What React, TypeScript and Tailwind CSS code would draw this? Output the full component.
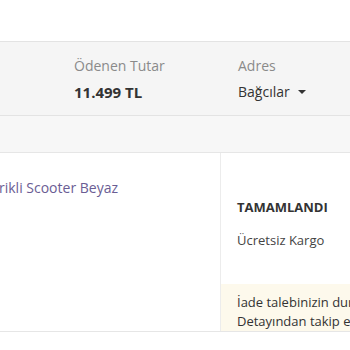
export default function App() {
  return (
    <div className="w-[350px] h-[350px] overflow-hidden bg-white" style={{ fontFamily: '"Open Sans", sans-serif' }}>
      <div className="h-[41px] bg-white" />
      <div className="border-t border-[#e3e3e3] bg-[#f5f5f5] h-[74px] flex pl-[74px] pt-[14px]">
        <div className="w-[164px] shrink-0">
          <div className="text-[14px] leading-[20px] text-[#8a8a8a]">Ödenen Tutar</div>
          <div className="mt-[6px] text-[15px] leading-[20px] font-bold text-[#333]">11.499 TL</div>
        </div>
        <div className="shrink-0">
          <div className="text-[14px] leading-[20px] text-[#8a8a8a]">Adres</div>
          <div className="mt-[6px] text-[14px] leading-[20px] text-[#333] flex items-center">
            Bağcılar
            <span className="ml-[8px] w-0 h-0 border-l-[4px] border-r-[4px] border-t-[4px] border-l-transparent border-r-transparent border-t-[#333]" />
          </div>
        </div>
      </div>
      <div className="border-t border-[#e3e3e3] bg-[#f7f7f7] h-[37px]" />
      <div className="border-t border-b border-[#e6e6e6] flex h-[180px]">
        <div className="w-[221px] shrink-0 border-r border-[#ececec] pt-[25px]">
          <div className="text-[14px] leading-[20px] text-[#6a5d94] whitespace-nowrap -ml-[1px]">rikli Scooter Beyaz</div>
        </div>
        <div className="flex-1 flex flex-col">
          <div className="pl-[16px] pt-[45px] flex-1">
            <div className="text-[13px] leading-[18px] font-bold text-[#333] whitespace-nowrap">TAMAMLANDI</div>
            <div className="mt-[15px] text-[13px] leading-[18px] text-[#444] whitespace-nowrap">Ücretsiz Kargo</div>
          </div>
          <div className="bg-[#fdf9ec] pl-[16px] pt-[9px] h-[47px] overflow-hidden">
            <div className="text-[13px] leading-[19px] text-[#333] whitespace-nowrap">İade talebinizin durumunu</div>
            <div className="text-[13px] leading-[19px] text-[#333] whitespace-nowrap">Detayından takip edebilirsiniz</div>
          </div>
        </div>
      </div>
    </div>
  );
}
